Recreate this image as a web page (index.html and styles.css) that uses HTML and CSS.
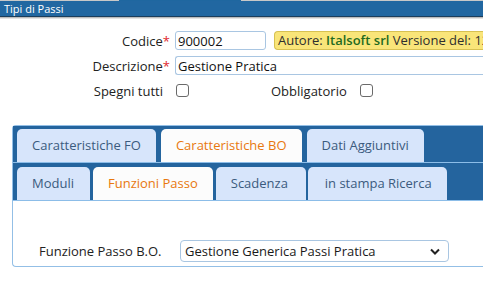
FILE: index.html
```html
<!DOCTYPE html>
<html lang="it">

<head>
    <meta charset="UTF-8">
    <title>Tipi di Passi</title>
    <link rel="stylesheet" href="styles.css">
</head>

<body>
    <div class="top-strip">
        <span class="strip-grey strip-left"></span>
        <span class="strip-blue"></span>
        <span class="strip-grey strip-right"></span>
    </div>
    <div class="titlebar">Tipi di Passi</div>

    <div class="form">
        <div class="row">
            <label class="lbl">Codice<span class="req">*</span></label>
            <input class="input input-code" type="text" value="900002">
            <div class="author">Autore: <b>Italsoft srl</b> Versione del: 12/03/2019</div>
        </div>
        <div class="row">
            <label class="lbl">Descrizione<span class="req">*</span></label>
            <input class="input input-desc" type="text" value="Gestione Pratica">
        </div>
        <div class="row row-check">
            <label class="lbl">Spegni tutti</label>
            <span class="check"></span>
            <label class="lbl-obbl">Obbligatorio</label>
            <span class="check"></span>
        </div>
    </div>

    <div class="tabs">
        <div class="tabbar">
            <div class="tab">Caratteristiche FO</div>
            <div class="tab active">Caratteristiche BO</div>
            <div class="tab">Dati Aggiuntivi</div>
        </div>
        <div class="tabbar tabbar-inner">
            <div class="tab tab-moduli">Moduli</div>
            <div class="tab tab-funz active">Funzioni Passo</div>
            <div class="tab tab-scad">Scadenza</div>
            <div class="tab tab-stampa">in stampa Ricerca</div>
        </div>
        <div class="panel">
            <label class="panel-lbl">Funzione Passo B.O.</label>
            <div class="select">
                <span>Gestione Generica Passi Pratica</span>
                <svg width="10" height="7" viewBox="0 0 10 7"><path d="M1 1.5 L5 5.5 L9 1.5" fill="none" stroke="#222" stroke-width="2"/></svg>
            </div>
        </div>
    </div>
</body>

</html>
```

FILE: styles.css
```css
body {
    margin: 0;
    padding: 0;
    font-family: 'Open Sans', sans-serif;
    font-size: 13px;
    color: #222222;
    background-color: #ffffff;
    overflow: hidden;
}

.top-strip {
    display: flex;
    height: 1px;
    background-color: #1f67a0;
}

.strip-grey {
    background-color: #c8c8c8;
}

.strip-left {
    width: 119px;
}

.strip-blue {
    width: 122px;
}

.strip-right {
    flex: 1;
}

.titlebar {
    background-color: #2167a1;
    color: #ffffff;
    font-size: 11px;
    line-height: 15px;
    padding-left: 4px;
    border-bottom: 1px solid #1b3e5c;
    box-shadow: 0 1px 0 #bdbdbd, 0 2px 0 #e3e3e3;
}

.form {
    padding-top: 14px;
}

.row {
    display: flex;
    align-items: center;
    height: 19px;
    margin-bottom: 6px;
    white-space: nowrap;
}

.lbl {
    width: 170px;
    text-align: right;
    flex-shrink: 0;
}

.req {
    color: #e0282e;
}

.input {
    font-family: 'Open Sans', sans-serif;
    font-size: 13px;
    color: #111111;
    height: 19px;
    box-sizing: border-box;
    padding: 0 2px;
    margin-left: 5px;
    outline: none;
}

.input-code {
    width: 91px;
    border: 1px solid #a9c6e2;
    border-radius: 3px;
    flex-shrink: 0;
}

.input-desc {
    flex: 1;
    margin-left: 5px;
    border: none;
    border-top: 1px solid #a9c6e2;
    border-bottom: 1px solid #a9c6e2;
    border-left: 1px solid #a9c6e2;
    border-radius: 3px 0 0 3px;
}

.author {
    margin-left: 8px;
    background-color: #f9e579;
    border: 1px solid #d7c152;
    border-right: none;
    border-radius: 4px 0 0 4px;
    height: 17px;
    line-height: 17px;
    padding-left: 3px;
    color: #2e2e2e;
}

.author b {
    color: #1f6b1f;
    font-weight: 600;
}

.row-check {
    margin-top: 2px;
}

.row-check .lbl {
    width: 163px;
}

.check {
    display: inline-block;
    width: 11px;
    height: 11px;
    border: 1px solid #6a6a6a;
    border-radius: 3px;
    margin-left: 13px;
    flex-shrink: 0;
}

.lbl-obbl {
    margin-left: 82px;
}

.tabs {
    margin: 25px 0 0 12px;
    border: 1px solid #93bfe6;
    border-right: none;
    border-radius: 4px 0 0 4px;
}

.tabbar {
    display: flex;
    gap: 5px;
    background-color: #24649e;
    padding: 3px 0 0 4px;
    height: 33px;
    border-bottom: 1px solid #8cbde8;
}

.tabbar-inner {
    padding-top: 4px;
    gap: 3px;
    height: 33px;
}

.tab {
    background-color: #d7e5fb;
    color: #3b5b7e;
    border-radius: 5px 5px 0 0;
    line-height: 33px;
    padding: 0 15px;
    white-space: nowrap;
}

.tab.active {
    background-color: #fcfcfc;
    color: #e8780e;
}

.tab-moduli {
    width: 43px;
}

.tab-funz {
    padding: 0 15px;
}

.tab-scad {
    width: 60px;
}

.tab-stampa {
    margin-left: -1px;
    padding: 0 15px 0 17px;
}

.panel {
    display: flex;
    align-items: center;
    padding: 39px 0 4px 26px;
}

.panel-lbl {
    width: 141px;
}

.select {
    display: flex;
    align-items: center;
    justify-content: space-between;
    width: 269px;
    height: 22px;
    box-sizing: border-box;
    border: 1px solid #a9c6e2;
    border-radius: 4px;
    padding: 0 8px 0 4px;
    color: #1a1a1a;
}
```
